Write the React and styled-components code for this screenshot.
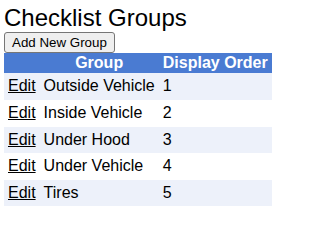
import styled, { createGlobalStyle } from "styled-components";

const GlobalStyle = createGlobalStyle`
  body {
    margin: 4px;
    font-family: "Liberation Sans", Arial, sans-serif;
    font-size: 16px;
    color: #000;
    background: #fff;
  }
`;

const Title = styled.h1`
  margin: 0;
  font-size: 24px;
  font-weight: normal;
  line-height: normal;
`;

const Button = styled.button`
  display: block;
  font-family: "Liberation Sans", Arial, sans-serif;
  font-size: 13.33px;
  line-height: normal;
  padding: 2px 7px;
  background: #efefef;
  color: #000;
  border: 1px solid #767676;
  border-radius: 3px;
  cursor: pointer;
`;

const Table = styled.table`
  border-collapse: collapse;
  font-size: 16px;
`;

const Th = styled.th`
  background: #4a7bd2;
  color: #fff;
  font-weight: bold;
  line-height: 18.4px;
  padding: 1px 4px;
  text-align: center;
  white-space: nowrap;
`;

const Row = styled.tr`
  background: ${(p) => (p.$striped ? "#edf1fa" : "#fff")};
`;

const Td = styled.td`
  padding: 4px;
  line-height: 18.6px;
  white-space: nowrap;
`;

const EditLink = styled.a`
  color: #000;
  text-decoration: underline;
  cursor: pointer;
`;

const groups = [
  { name: "Outside Vehicle", order: 1 },
  { name: "Inside Vehicle", order: 2 },
  { name: "Under Hood", order: 3 },
  { name: "Under Vehicle", order: 4 },
  { name: "Tires", order: 5 },
];

const App = () => {
  return (
    <>
      <GlobalStyle />
      <Title>Checklist Groups</Title>
      <Button>Add New Group</Button>
      <Table>
        <thead>
          <tr>
            <Th></Th>
            <Th>Group</Th>
            <Th>Display Order</Th>
          </tr>
        </thead>
        <tbody>
          {groups.map((g, i) => (
            <Row key={g.name} $striped={i % 2 === 0}>
              <Td>
                <EditLink>Edit</EditLink>
              </Td>
              <Td>{g.name}</Td>
              <Td>{g.order}</Td>
            </Row>
          ))}
        </tbody>
      </Table>
    </>
  );
};

export default App;
